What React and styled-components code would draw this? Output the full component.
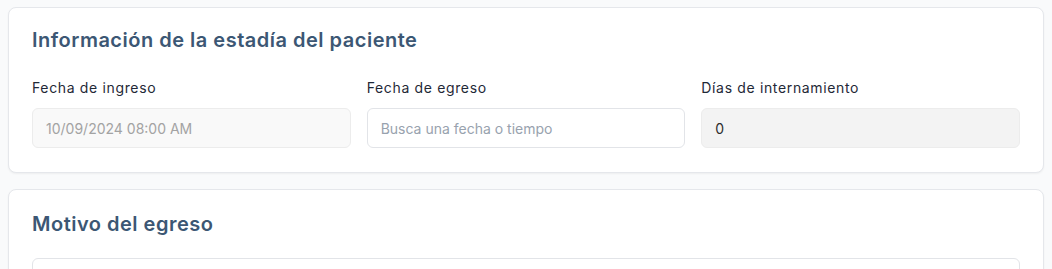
import React from 'react';
import styled, {createGlobalStyle} from 'styled-components';

const GlobalStyle = createGlobalStyle`
  body {
    margin: 0;
    padding: 7px 8px;
    background: #f9fafb;
    font-family: Inter, "Noto Sans", sans-serif;
  }
`

const Page = styled.div`
  display: flex;
  flex-direction: column;
  gap: 16px;
`

const Card = styled.section`
  background: #fff;
  border: 1px solid #e5e7eb;
  border-radius: 8px;
  box-shadow: 0 1px 2px rgba(0, 0, 0, 0.05);
  padding: ${p => p.$top || 20}px 23px 24px;
`

const Title = styled.h2`
  margin: 0 0 ${p => p.$gap || 26}px;
  font-size: 20px;
  line-height: 24px;
  font-weight: 600;
  letter-spacing: 0.5px;
  color: #3c5774;
`

const Row = styled.div`
  display: grid;
  grid-template-columns: repeat(3, 1fr);
  gap: 16px;
`

const Field = styled.div`
  display: flex;
  flex-direction: column;
`

const Label = styled.label`
  font-size: 14px;
  line-height: 20px;
  font-weight: 400;
  letter-spacing: 0.65px;
  color: #1f2937;
  margin-bottom: 10px;
`

const Input = styled.input`
  box-sizing: border-box;
  height: 40px;
  width: 100%;
  padding: 0 13px;
  border: 1px solid ${p => (p.$variant ? '#ececec' : '#e2e4e8')};
  border-radius: 6px;
  background: ${p => (p.$variant === 'readonly' ? '#f3f3f3' : p.$variant === 'disabled' ? '#f9f9f9' : '#fff')};
  font-family: inherit;
  font-size: 14px;
  color: ${p => (p.$variant === 'disabled' ? '#a3a3a3' : '#2d2d2d')};
  outline: none;
  &::placeholder {
    color: #98a2ae;
  }
`

const TextArea = styled.div`
  box-sizing: border-box;
  height: 40px;
  border: 1px solid #e2e4e8;
  border-radius: 6px;
  background: #fff;
`

const App = () => {
    return (
        <>
            <GlobalStyle/>
            <Page>
                <Card>
                    <Title>Información de la estadía del paciente</Title>
                    <Row>
                        <Field>
                            <Label>Fecha de ingreso</Label>
                            <Input $variant="disabled" value="10/09/2024 08:00 AM" readOnly/>
                        </Field>
                        <Field>
                            <Label>Fecha de egreso</Label>
                            <Input placeholder="Busca una fecha o tiempo"/>
                        </Field>
                        <Field>
                            <Label>Días de internamiento</Label>
                            <Input $variant="readonly" value="0" readOnly/>
                        </Field>
                    </Row>
                </Card>
                <Card $top={22}>
                    <Title $gap={22}>Motivo del egreso</Title>
                    <TextArea/>
                </Card>
            </Page>
        </>
    )
}

export default App;
